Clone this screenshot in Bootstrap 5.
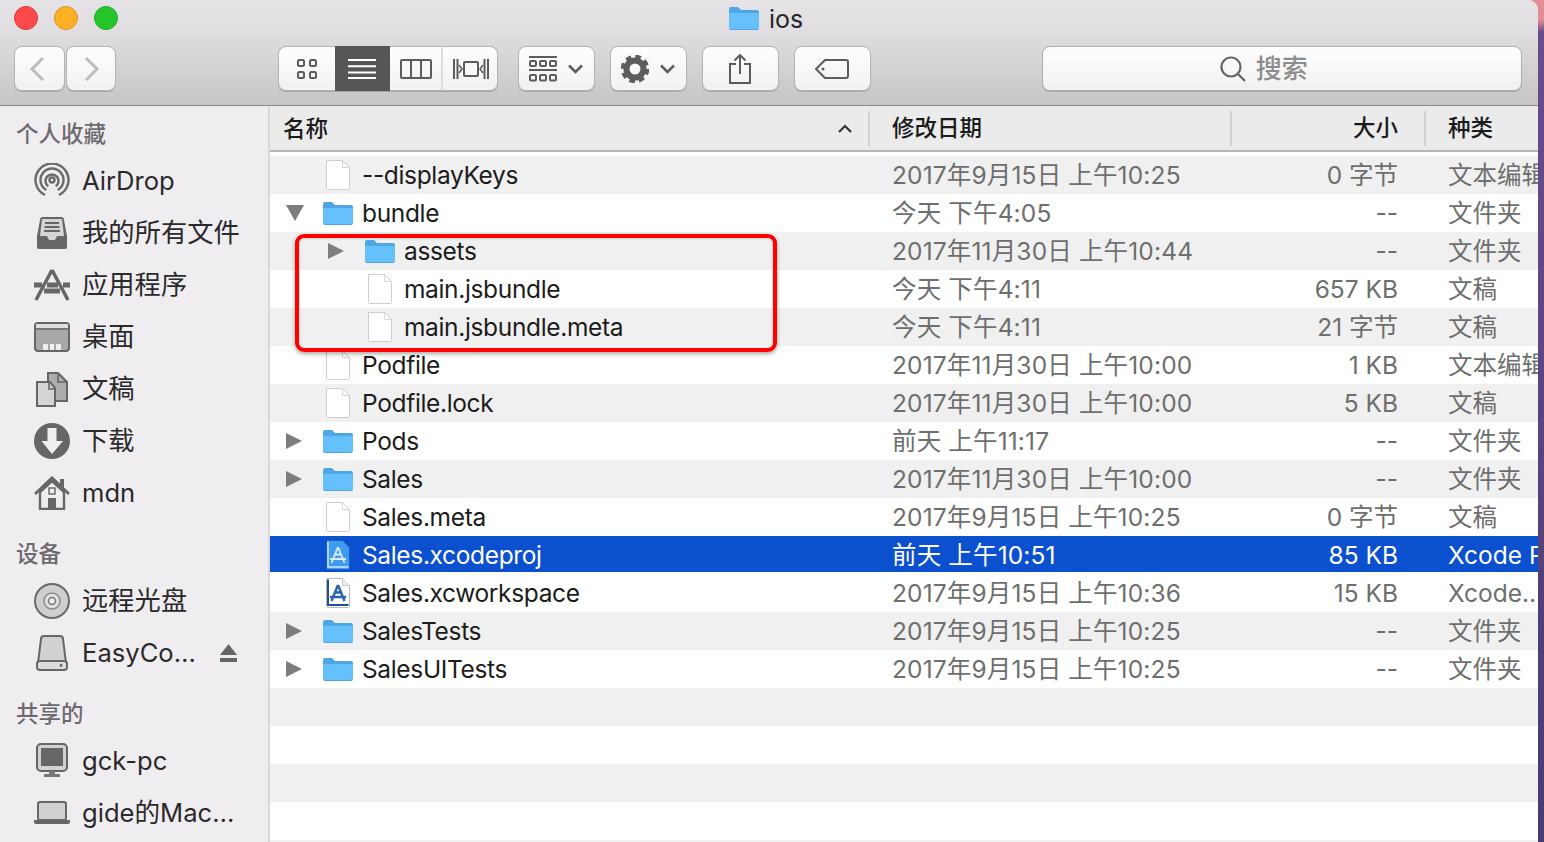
<!DOCTYPE html>
<html lang="zh-CN">
<head>
<meta charset="UTF-8">
<meta name="viewport" content="width=device-width, initial-scale=1.0">
<title>ios</title>
<link href="https://cdn.jsdelivr.net/npm/bootstrap@5.3.0/dist/css/bootstrap.min.css" rel="stylesheet">
<style>
html, body { height: 100%; }
body {
    margin: 0; overflow: hidden; color: #1c1c1c;
    font-family: Inter, "Noto Sans CJK SC", sans-serif; font-size: 26px; line-height: 38px;
    background: linear-gradient(#e38d96 0, #e38d96 20px, #6a4c8c 32px, #4a3a70 100%);
}
.win { width: 1538px; height: 842px; border-top-right-radius: 10px; overflow: hidden; background: #fff; }

/* toolbar */
.tbar { height: 106px; flex: none; background: linear-gradient(#e6e3e6 0, #e0dee0 30%, #c6c4c6 100%); border-bottom: 1px solid #8c8a8c; }
.title-row { height: 37px; padding: 6px 0 0 14px; }
.light { width: 24px; height: 24px; border-radius: 50%; margin-right: 16px; border: 1px solid; }
.l-red { background: #fc4a4a; border-color: #e0393c; }
.l-amb { background: #fdb024; border-color: #df9420; }
.l-grn { background: #27c52c; border-color: #1ead25; }
.win-title { margin-left: 595px; gap: 10px; height: 24px; line-height: 24px; color: #262626; font-size: 25px; }
.win-title span { padding-top: 2px; }
.tools { padding: 9px 16px 0 14px; height: 53px; }
.tbtn {
    height: 45px; padding: 0; border: 1px solid #b4b2b4; border-radius: 8px; display: flex; align-items: center; justify-content: center;
    background: linear-gradient(#fefefe, #f1f1f1); box-shadow: 0 1px 0 #a8a6a8; --bs-btn-hover-bg: #f6f6f6;
}
.w-nav { width: 51px; padding-right: 5px; }
.w-nav2 { width: 50px; margin-left: 1px; padding-left: 3px; }
.seg-a { width: 57px; border-radius: 8px 0 0 8px; border-right: 0; }
.seg-b { width: 55px; border-radius: 0; background: #565656; border-color: #565656; }
.seg-c { width: 53px; border-radius: 0; border-left: 0; border-right: 2px solid #dcdcdc; padding-left: 2px; }
.seg-d { width: 55px; border-radius: 0 8px 8px 0; border-left: 0; padding-left: 3px; }
.w-act { width: 77px; gap: 11px; }
.search-box { width: 481px; margin-left: 171px; gap: 10px; padding-right: 36px; color: #8d8d8d; font-weight: 500; border-color: #aeacae; }
.mleft20 { margin-left: 20px; }
.mleft16 { margin-left: 15px; }
.mleft162 { margin-left: 162px; }

/* sidebar */
.main-area { height: 736px; overflow: hidden; }
.side { width: 270px; height: 736px; flex: none; background: #f0edf1; border-right: 2px solid #dad8da; padding-top: 8px; }
.side-head { padding-left: 16px; height: 41px; line-height: 40px; font-size: 22.5px; font-weight: 500; color: #6d6a6e; }
.side-item { height: 52px; padding-left: 34px; gap: 12px; color: #2a2a2a; white-space: nowrap; font-size: 25.6px; }
.side-item svg { flex: none; }
.cjk-label { font-size: 26.3px; }
.side-gap { margin-top: 15px; }
.eject { margin-left: auto; margin-right: 31px; }

/* file list */
.files { flex: 1; min-width: 0; position: relative; }
.col-head { height: 46px; background: #ebebeb; border-bottom: 2px solid #b6b6b6; font-size: 22.5px; font-weight: 500; color: #1b1b1b; }
.col-head > div { height: 35px; line-height: 33px; }
.c-name { width: 598px; flex: none; }
.c-date { width: 363px; flex: none; padding-left: 24px; letter-spacing: .15px; }
.c-size { width: 194px; flex: none; text-align: right; padding-right: 27px; }
.c-kind { flex: 1; min-width: 0; padding-left: 23px; overflow: hidden; white-space: nowrap; }
.col-head .c-date, .col-head .c-size, .col-head .c-kind { border-left: 2px solid #d0d0d0; }
.col-head .c-date { width: 362px; padding-left: 22px; letter-spacing: 0; }
.col-head .c-size { padding-right: 26px; }
.col-head .c-kind { padding-left: 22px; }
.col-head .c-name { padding: 0 16px 0 13px; }
.list-pad { height: 4px; }
.frow { height: 38px; line-height: 39px; color: #6e6e6e; background: #fff; font-size: 24.5px; }
.frow:nth-child(odd) { background: #f0f0f0; }
.frow .c-name { color: #1c1c1c; display: flex; align-items: center; letter-spacing: -.35px; }
.frow.picked { background: #0b50cf; color: #fff; border-bottom: 2px solid #fff; }
.frow.picked .c-name { color: #fff; padding-top: 2px; }
.tw { width: 48px; flex: none; padding-left: 16px; display: flex; align-items: center; }
.lvl1 { padding-left: 42px; }
.ico { width: 39px; flex: none; display: flex; justify-content: center; margin-right: 5px; }
.red-box {
    position: absolute; left: 25px; top: 128px; width: 482px; height: 118px;
    border: 4px solid #f00; border-radius: 9px; box-shadow: 0 2px 4px rgba(0,0,0,.35), inset 0 0 3px rgba(0,0,0,.25); pointer-events: none;
}
</style>
</head>
<body>
<svg width="0" height="0" class="position-absolute">
    <symbol id="folder" viewBox="0 0 30 24">
        <path d="M0 3a2 2 0 0 1 2-2h7l3 3h16a2 2 0 0 1 2 2v16a2 2 0 0 1-2 2H2a2 2 0 0 1-2-2z" fill="#4ea6e4"/>
        <path d="M0 7h30v15a1 1 0 0 1-1 1H1a1 1 0 0 1-1-1z" fill="#66c0fb"/>
    </symbol>
    <symbol id="doc" viewBox="0 0 26 32">
        <path d="M1.5 1.5h16l7 7v21a1 1 0 0 1-1 1h-21a1 1 0 0 1-1-1z" fill="#fff" stroke="#cfcfcf"/>
        <path d="M17.5 1.5v7h7" fill="none" stroke="#d8d8d8"/>
    </symbol>
    <symbol id="xdoc" viewBox="0 0 26 32">
        <path d="M1.5 1.5h16l7 7v21a1 1 0 0 1-1 1h-21a1 1 0 0 1-1-1z" fill="#fff" stroke="#bbb"/>
        <path d="M17.5 1.5v7h7" fill="#eee" stroke="#ccc"/>
        <path d="M3 2.500v25.500h20.500" fill="none" stroke="#1c4f96" stroke-width="2"/>
        <path d="M13 8l6.500 16M13 8L6.500 24M5 20h16M9.500 15.500h7" fill="none" stroke="#2a62ad" stroke-width="2.400"/>
    </symbol>
    <symbol id="xdoc-sel" viewBox="0 0 26 32">
        <path d="M1.5 1.5h16l7 7v21a1 1 0 0 1-1 1h-21a1 1 0 0 1-1-1z" fill="#3f9bf0" stroke="#1b5fc4"/>
        <path d="M3 2.500v25.500h20.500" fill="none" stroke="#cfe6ff" stroke-width="1.500"/>
        <path d="M13 8l6.500 16M13 8L6.500 24M5 20h16M9.500 15.500h7" fill="none" stroke="#d6ecff" stroke-width="1.800"/>
    </symbol>
    <symbol id="tri-r" viewBox="0 0 16 16"><path d="M0 0l16 8L0 16z" fill="#7d7d7d"/></symbol>
    <symbol id="tri-d" viewBox="0 0 18 16"><path d="M0 0h18L9 16z" fill="#7d7d7d"/></symbol>
</svg>

<div class="win d-flex flex-column">
    <!-- Toolbar -->
    <div class="tbar">
        <div class="title-row d-flex">
            <div class="light l-red"></div>
            <div class="light l-amb"></div>
            <div class="light l-grn"></div>
            <div class="win-title d-flex align-items-center">
                <svg width="30" height="24"><use href="#folder"/></svg>
                <span>ios</span>
            </div>
        </div>
        <div class="tools d-flex">
            <button class="btn tbtn w-nav"><svg width="16" height="26" fill="none" stroke="#bdbdbd" stroke-width="3"><path d="M14 2L3 13l11 11"/></svg></button>
            <button class="btn tbtn w-nav2"><svg width="16" height="26" fill="none" stroke="#bdbdbd" stroke-width="3"><path d="M2 2l11 11L2 24"/></svg></button>

            <div class="d-flex mleft162">
                <button class="btn tbtn seg-a"><svg width="22" height="20" fill="none" stroke="#5c5c5c" stroke-width="2"><rect x="2" y="1" width="6" height="6" rx="1.5"/><rect x="14" y="1" width="6" height="6" rx="1.5"/><rect x="2" y="13" width="6" height="6" rx="1.5"/><rect x="14" y="13" width="6" height="6" rx="1.5"/></svg></button>
                <button class="btn tbtn seg-b"><svg width="28" height="20" stroke="#fff" stroke-width="2"><path d="M0 1h28M0 7.300h28M0 13.600h28M0 19h28"/></svg></button>
                <button class="btn tbtn seg-c"><svg width="32" height="20" fill="none" stroke="#5c5c5c" stroke-width="2"><rect x="1" y="1" width="30" height="18" rx="1"/><path d="M11 1v18M21 1v18"/></svg></button>
                <button class="btn tbtn seg-d"><svg width="36" height="20" fill="none" stroke="#5c5c5c" stroke-width="2"><rect x="11" y="3" width="14" height="14" rx="1"/><path d="M1 0v20M4.500 0v20M35 0v20M31.500 0v20"/><path d="M6 6l3 4-3 4M30 6l-3 4 3 4" stroke-width="1.500"/></svg></button>
            </div>

            <button class="btn tbtn w-act mleft20">
                <svg width="28" height="26" fill="none" stroke="#5c5c5c" stroke-width="2"><path d="M0 1h28M0 14h28" /><rect x="1" y="5" width="6" height="5" rx="1"/><rect x="11" y="5" width="6" height="5" rx="1"/><rect x="21" y="5" width="6" height="5" rx="1"/><rect x="1" y="19" width="6" height="5.500" rx="1"/><rect x="11" y="19" width="6" height="5.500" rx="1"/><rect x="21" y="19" width="6" height="5.500" rx="1"/></svg>
                <svg width="15" height="10" fill="none" stroke="#5c5c5c" stroke-width="2.500"><path d="M1 1.500l6.500 6.500L14 1.500"/></svg>
            </button>
            <button class="btn tbtn w-act mleft16">
                <svg width="28" height="28" fill="none" stroke="#5c5c5c"><circle cx="14" cy="14" r="8.500" stroke-width="6"/><circle cx="14" cy="14" r="12" stroke-width="4.500" stroke-dasharray="5.420 4"/></svg>
                <svg width="15" height="10" fill="none" stroke="#5c5c5c" stroke-width="2.500"><path d="M1 1.500l6.500 6.500L14 1.500"/></svg>
            </button>
            <button class="btn tbtn w-act mleft16"><svg width="22" height="30" fill="none" stroke="#5c5c5c" stroke-width="2"><path d="M7 10H1v19h20V10h-6M11 20V1M5.500 6.500L11 1l5.500 5.500"/></svg></button>
            <button class="btn tbtn w-act mleft16"><svg width="34" height="20" fill="none" stroke="#5c5c5c" stroke-width="2"><path d="M10 1h21a2 2 0 0 1 2 2v14a2 2 0 0 1-2 2H10L1 10z"/><circle cx="8" cy="10" r="1.500" fill="#5c5c5c" stroke="none"/></svg></button>

            <div class="tbtn search-box">
                <svg width="26" height="26" fill="none" stroke="#666" stroke-width="2.200"><circle cx="11" cy="11" r="9.500"/><path d="M18 18l7 7"/></svg>
                <span>搜索</span>
            </div>
        </div>
    </div>

    <div class="main-area d-flex">
        <!-- Sidebar -->
        <div class="side">
            <div class="side-head">个人收藏</div>
            <div class="side-item d-flex align-items-center">
                <svg width="36" height="36" fill="none" stroke="#6a6a6a" stroke-width="2.400"><circle cx="18" cy="17" r="2.500"/><path d="M14.300 23.300A6.500 6.500 0 1 1 21.700 23.300M12.300 27A11.500 11.500 0 1 1 23.700 27M11 32A16.500 16.500 0 1 1 25 32"/></svg>
                <span>AirDrop</span>
            </div>
            <div class="side-item d-flex align-items-center">
                <svg width="36" height="36"><path d="M6 5a3 3 0 0 1 3-3h18a3 3 0 0 1 3 3l3 16v11a2 2 0 0 1-2 2H5a2 2 0 0 1-2-2V21z" fill="#666"/><path d="M8 4h20l2 17h-7l-2 4h-6l-2-4H6z" fill="#d5d3d6"/><path d="M11 8h14M10.500 12h15M10 16h16" stroke="#666" stroke-width="1.800"/></svg>
                <span class="cjk-label">我的所有文件</span>
            </div>
            <div class="side-item d-flex align-items-center">
                <svg width="36" height="36" fill="none" stroke="#666"><path d="M0 18h36" stroke-width="5" stroke-dasharray="8 5 11 5 7"/><path d="M10 24h16" stroke-width="5"/><path d="M18 3L2 33M18 3l16 30" stroke-width="3.500"/></svg>
                <span class="cjk-label">应用程序</span>
            </div>
            <div class="side-item d-flex align-items-center">
                <svg width="36" height="30"><rect x="1" y="1" width="34" height="28" rx="3" fill="#a9a7aa" stroke="#666" stroke-width="2"/><path d="M2 7h32" stroke="#666" stroke-width="1.500"/><rect x="2" y="2" width="32" height="4" fill="#dfdde0"/><path d="M9 22h18v6H9z" fill="#f0edf1"/><path d="M15 22v6M21 22v6" stroke="#a9a7aa" stroke-width="2"/></svg>
                <span class="cjk-label">桌面</span>
            </div>
            <div class="side-item d-flex align-items-center">
                <svg width="36" height="36"><path d="M14 2h10l9 9v19H14z" fill="#aeacaf" stroke="#666" stroke-width="2"/><path d="M3 11h13l5 6v18H3z" fill="#d6d4d7" stroke="#666" stroke-width="2"/><path d="M24 2v9h9M15 11v7h6" fill="none" stroke="#666" stroke-width="1.600"/></svg>
                <span class="cjk-label">文稿</span>
            </div>
            <div class="side-item d-flex align-items-center">
                <svg width="36" height="36"><circle cx="18" cy="18" r="18" fill="#666"/><path d="M13.500 5h9v13H29L18 31 7.500 18h6z" fill="#f0edf1"/></svg>
                <span class="cjk-label">下载</span>
            </div>
            <div class="side-item d-flex align-items-center">
                <svg width="36" height="34"><path d="M6 16L18 5l12 11v17H6z" fill="#f0edf1" stroke="#666" stroke-width="2.400"/><path d="M1 18L18 2l17 16" fill="none" stroke="#666" stroke-width="3"/><rect x="26" y="3" width="4" height="8" fill="#666"/><rect x="15" y="12" width="6" height="6" fill="none" stroke="#666" stroke-width="1.400"/><rect x="14" y="22" width="8" height="11" fill="#666"/></svg>
                <span>mdn</span>
            </div>

            <div class="side-head side-gap">设备</div>
            <div class="side-item d-flex align-items-center">
                <svg width="36" height="36"><circle cx="18" cy="18" r="17" fill="#d0ced1" stroke="#6a6a6a" stroke-width="2"/><circle cx="18" cy="18" r="8" fill="#e2e0e3" stroke="#8a8a8a" stroke-width="1.500"/><circle cx="18" cy="18" r="3.500" fill="#f0edf1" stroke="#777" stroke-width="1.500"/></svg>
                <span class="cjk-label">远程光盘</span>
            </div>
            <div class="side-item d-flex align-items-center">
                <svg width="36" height="36"><path d="M7 4a3 3 0 0 1 3-3h16a3 3 0 0 1 3 3l3 24H4z" fill="#d2d0d3" stroke="#666" stroke-width="2"/><rect x="3" y="26" width="30" height="9" rx="3" fill="#dddbde" stroke="#666" stroke-width="2"/><circle cx="27" cy="30.500" r="1.400" fill="#666"/></svg>
                <span>EasyCo…</span>
                <svg class="eject" width="17" height="18" fill="#666"><path d="M8.500 0L17 11H0z"/><rect y="14" width="17" height="4"/></svg>
            </div>

            <div class="side-head side-gap">共享的</div>
            <div class="side-item d-flex align-items-center">
                <svg width="36" height="36"><rect x="3" y="1" width="30" height="27" rx="4" fill="#d2d0d3" stroke="#666" stroke-width="2"/><rect x="7" y="5" width="22" height="18" fill="#666"/><path d="M15 28h6v3h5v3H10v-3h5z" fill="#777"/></svg>
                <span>gck-pc</span>
            </div>
            <div class="side-item d-flex align-items-center">
                <svg width="36" height="24"><rect x="4" y="1" width="28" height="18" rx="2" fill="#d2d0d3" stroke="#666" stroke-width="2"/><path d="M0 19h36v2a2 2 0 0 1-2 2H2a2 2 0 0 1-2-2z" fill="#666"/></svg>
                <span>gide的Mac…</span>
            </div>
        </div>

        <!-- File list -->
        <div class="files">
            <div class="col-head d-flex align-items-center">
                <div class="c-name d-flex justify-content-between align-items-center">
                    <span>名称</span>
                    <svg width="14" height="9" fill="none" stroke="#333" stroke-width="2.200"><path d="M1 8l6-6 6 6"/></svg>
                </div>
                <div class="c-date">修改日期</div>
                <div class="c-size">大小</div>
                <div class="c-kind">种类</div>
            </div>
            <div class="list-pad"></div>
            <div>
                <div class="frow d-flex"><div class="c-name"><span class="tw"></span><span class="ico"><svg width="26" height="32"><use href="#doc"/></svg></span><span>--displayKeys</span></div><div class="c-date">2017年9月15日 上午10:25</div><div class="c-size">0 字节</div><div class="c-kind">文本编辑</div></div>
                <div class="frow d-flex"><div class="c-name"><span class="tw"><svg width="18" height="16"><use href="#tri-d"/></svg></span><span class="ico"><svg width="30" height="24"><use href="#folder"/></svg></span><span>bundle</span></div><div class="c-date">今天 下午4:05</div><div class="c-size">--</div><div class="c-kind">文件夹</div></div>
                <div class="frow d-flex"><div class="c-name lvl1"><span class="tw"><svg width="16" height="16"><use href="#tri-r"/></svg></span><span class="ico"><svg width="30" height="24"><use href="#folder"/></svg></span><span>assets</span></div><div class="c-date">2017年11月30日 上午10:44</div><div class="c-size">--</div><div class="c-kind">文件夹</div></div>
                <div class="frow d-flex"><div class="c-name lvl1"><span class="tw"></span><span class="ico"><svg width="26" height="32"><use href="#doc"/></svg></span><span>main.jsbundle</span></div><div class="c-date">今天 下午4:11</div><div class="c-size">657 KB</div><div class="c-kind">文稿</div></div>
                <div class="frow d-flex"><div class="c-name lvl1"><span class="tw"></span><span class="ico"><svg width="26" height="32"><use href="#doc"/></svg></span><span>main.jsbundle.meta</span></div><div class="c-date">今天 下午4:11</div><div class="c-size">21 字节</div><div class="c-kind">文稿</div></div>
                <div class="frow d-flex"><div class="c-name"><span class="tw"></span><span class="ico"><svg width="26" height="32"><use href="#doc"/></svg></span><span>Podfile</span></div><div class="c-date">2017年11月30日 上午10:00</div><div class="c-size">1 KB</div><div class="c-kind">文本编辑</div></div>
                <div class="frow d-flex"><div class="c-name"><span class="tw"></span><span class="ico"><svg width="26" height="32"><use href="#doc"/></svg></span><span>Podfile.lock</span></div><div class="c-date">2017年11月30日 上午10:00</div><div class="c-size">5 KB</div><div class="c-kind">文稿</div></div>
                <div class="frow d-flex"><div class="c-name"><span class="tw"><svg width="16" height="16"><use href="#tri-r"/></svg></span><span class="ico"><svg width="30" height="24"><use href="#folder"/></svg></span><span>Pods</span></div><div class="c-date">前天 上午11:17</div><div class="c-size">--</div><div class="c-kind">文件夹</div></div>
                <div class="frow d-flex"><div class="c-name"><span class="tw"><svg width="16" height="16"><use href="#tri-r"/></svg></span><span class="ico"><svg width="30" height="24"><use href="#folder"/></svg></span><span>Sales</span></div><div class="c-date">2017年11月30日 上午10:00</div><div class="c-size">--</div><div class="c-kind">文件夹</div></div>
                <div class="frow d-flex"><div class="c-name"><span class="tw"></span><span class="ico"><svg width="26" height="32"><use href="#doc"/></svg></span><span>Sales.meta</span></div><div class="c-date">2017年9月15日 上午10:25</div><div class="c-size">0 字节</div><div class="c-kind">文稿</div></div>
                <div class="frow picked d-flex"><div class="c-name"><span class="tw"></span><span class="ico"><svg width="26" height="32"><use href="#xdoc-sel"/></svg></span><span>Sales.xcodeproj</span></div><div class="c-date">前天 上午10:51</div><div class="c-size">85 KB</div><div class="c-kind">Xcode Project</div></div>
                <div class="frow d-flex"><div class="c-name"><span class="tw"></span><span class="ico"><svg width="26" height="32"><use href="#xdoc"/></svg></span><span>Sales.xcworkspace</span></div><div class="c-date">2017年9月15日 上午10:36</div><div class="c-size">15 KB</div><div class="c-kind">Xcode…</div></div>
                <div class="frow d-flex"><div class="c-name"><span class="tw"><svg width="16" height="16"><use href="#tri-r"/></svg></span><span class="ico"><svg width="30" height="24"><use href="#folder"/></svg></span><span>SalesTests</span></div><div class="c-date">2017年9月15日 上午10:25</div><div class="c-size">--</div><div class="c-kind">文件夹</div></div>
                <div class="frow d-flex"><div class="c-name"><span class="tw"><svg width="16" height="16"><use href="#tri-r"/></svg></span><span class="ico"><svg width="30" height="24"><use href="#folder"/></svg></span><span>SalesUITests</span></div><div class="c-date">2017年9月15日 上午10:25</div><div class="c-size">--</div><div class="c-kind">文件夹</div></div>
                <div class="frow"></div>
                <div class="frow"></div>
                <div class="frow"></div>
                <div class="frow"></div>
                <div class="frow"></div>
            </div>
            <div class="red-box"></div>
        </div>
    </div>
</div>
<script src="https://cdn.jsdelivr.net/npm/bootstrap@5.3.0/dist/js/bootstrap.bundle.min.js"></script>
</body>
</html>
